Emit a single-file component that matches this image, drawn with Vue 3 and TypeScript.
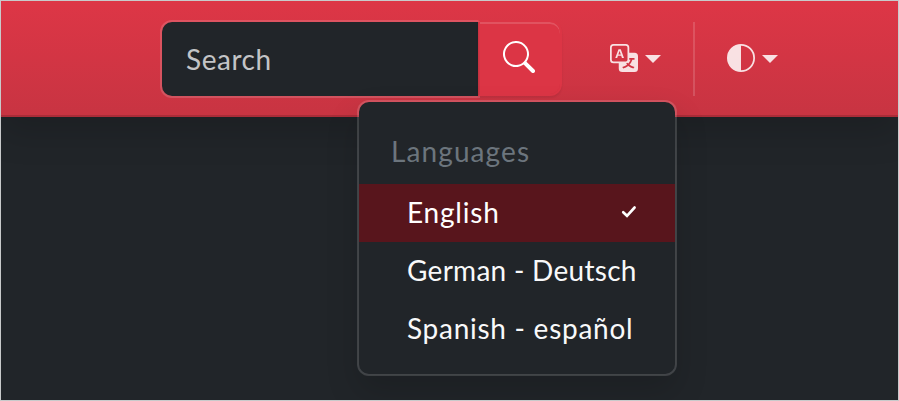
<script setup lang="ts">
interface Language {
  label: string
  kind: string
  active: boolean
}

const languages: Language[] = [
  { label: 'English', kind: 'english', active: true },
  { label: 'German - Deutsch', kind: 'german', active: false },
  { label: 'Spanish - español', kind: 'spanish', active: false },
]
</script>

<template>
  <div class="frame">
    <header class="navbar">
      <form class="search" @submit.prevent>
        <div class="search-input"><span class="t-search">Search</span></div>
        <button class="search-button" type="submit" aria-label="Search">
          <svg width="32" height="32" viewBox="0 0 16 16" fill="currentColor">
            <path d="M11.742 10.344a6.5 6.5 0 1 0-1.397 1.398h-.001q.044.06.098.115l3.85 3.85a1 1 0 0 0 1.415-1.414l-3.85-3.85a1 1 0 0 0-.115-.1zM12 6.5a5.5 5.5 0 1 1-11 0 5.5 5.5 0 0 1 11 0" />
          </svg>
        </button>
      </form>
      <nav class="tools">
        <div class="tool language">
          <svg width="28" height="28" viewBox="0 0 16 16" fill="currentColor">
            <path d="M4.545 6.714 4.11 8H3l1.862-5h1.284L8 8H6.833l-.435-1.286zm1.634-.736L5.5 3.956h-.049l-.679 2.022z" />
            <path d="M0 2a2 2 0 0 1 2-2h7a2 2 0 0 1 2 2v3h3a2 2 0 0 1 2 2v7a2 2 0 0 1-2 2H7a2 2 0 0 1-2-2v-3H2a2 2 0 0 1-2-2zm2-1a1 1 0 0 0-1 1v7a1 1 0 0 0 1 1h7a1 1 0 0 0 1-1V2a1 1 0 0 0-1-1zm7.138 9.995q.289.451.63.846c-.748.575-1.673 1.001-2.768 1.292.178.217.451.635.555.867 1.125-.359 2.08-.844 2.886-1.494.777.665 1.739 1.165 2.93 1.472.133-.254.414-.673.629-.89-1.125-.253-2.057-.694-2.82-1.284.681-.747 1.222-1.651 1.621-2.757H14V8h-3v1.047h.765c-.318.844-.74 1.546-1.272 2.13a6 6 0 0 1-.415-.492 2 2 0 0 1-.94.31" />
          </svg>
          <span class="caret"></span>
        </div>
        <div class="divider"></div>
        <div class="tool theme">
          <svg width="28" height="28" viewBox="0 0 16 16" fill="currentColor">
            <path d="M8 15A7 7 0 1 0 8 1zm0 1A8 8 0 1 1 8 0a8 8 0 0 1 0 16" />
          </svg>
          <span class="caret"></span>
        </div>
      </nav>
      <div class="menu">
        <div class="menu-title"><span class="t-title">Languages</span></div>
        <div
          v-for="language in languages"
          :key="language.kind"
          class="menu-item"
          :class="{ active: language.active }"
        >
          <span :class="'t-' + language.kind">{{ language.label }}</span>
          <svg v-if="language.active" class="check" width="18" height="16" viewBox="0 0 18 16">
            <path d="M3.2 8.2 7 11.8 14.6 3.5" />
          </svg>
        </div>
      </div>
    </header>
    <main class="page"></main>
  </div>
</template>

<style>
body {
  background: #212529;
}
</style>

<style scoped>
.frame {
  box-sizing: border-box;
  width: 899px;
  height: 401px;
  display: flex;
  flex-direction: column;
  overflow: hidden;
  border: 1px solid #c8cacb;
  background: #212529;
  font-family: Lato, "Noto Sans", sans-serif;
  font-size: 28px;
  line-height: 42px;
}
.navbar {
  position: relative;
  box-sizing: border-box;
  flex: none;
  height: 116px;
  padding: 19px 0 0 159px;
  display: flex;
  align-items: flex-start;
  border-bottom: 2px solid #aa2c38;
  background: linear-gradient(#dd3646, #c83442);
  box-shadow: 0 16px 32px rgba(0, 0, 0, 0.15);
}
.search {
  display: flex;
}
.search-input {
  box-sizing: border-box;
  width: 320px;
  height: 78px;
  padding: 16px 24px;
  border: 2px solid rgba(255, 255, 255, 0.15);
  border-right: 0;
  border-radius: 12px 0 0 12px;
  background: linear-gradient(#212529, #212529) 0 0 / 316px 100% no-repeat;
  background-clip: padding-box;
  color: #c3c4c6;
}
.search-button {
  box-sizing: border-box;
  width: 84px;
  height: 76px;
  margin: 0 0 0 -2px;
  padding: 0;
  display: flex;
  align-items: center;
  justify-content: center;
  border: 2px solid #dc3545;
  border-left-color: transparent;
  border-radius: 0 12px 12px 0;
  background: #dc3545;
  background-clip: padding-box;
  box-shadow: inset 0 2px 0 rgba(255, 255, 255, 0.15), 0 2px 2px rgba(0, 0, 0, 0.075);
  color: #fff;
}
.search-button svg {
  margin: -2px 2px 0 0;
}
.tools {
  display: flex;
  align-items: center;
  height: 74px;
  margin: 2px 0 0 48px;
}
.tool {
  display: flex;
  align-items: center;
  gap: 7px;
  color: rgba(255, 255, 255, 0.85);
}
.tool svg {
  display: block;
  margin-top: -2px;
}
.caret {
  width: 0;
  height: 0;
  border-top: 8px solid;
  border-right: 8px solid transparent;
  border-left: 8px solid transparent;
}
.divider {
  width: 2px;
  height: 74px;
  margin: 0 32px;
  background: rgba(255, 255, 255, 0.15);
}
.menu {
  position: absolute;
  z-index: 5;
  top: 99px;
  left: 356px;
  box-sizing: border-box;
  width: 320px;
  height: 276px;
  padding: 16px 0;
  border: 2px solid rgba(255, 255, 255, 0.15);
  border-radius: 12px;
  background: #212529;
  background-clip: padding-box;
  box-shadow: 0 16px 32px rgba(0, 0, 0, 0.15);
  color: #f8f9fa;
}
.menu-title {
  height: 66px;
  box-sizing: border-box;
  padding: 12px 32px;
  color: #6c757d;
}
.menu-item {
  display: flex;
  align-items: center;
  justify-content: space-between;
  box-sizing: border-box;
  height: 58px;
  padding: 0 37px 2px 48px;
  white-space: nowrap;
}
.menu-item.active {
  background: #58151c;
  color: #fff;
}
.check {
  fill: none;
  stroke: currentColor;
  stroke-width: 2.6;
  stroke-linecap: round;
}
.t-search {
  letter-spacing: 0.55px;
}
.t-title {
  letter-spacing: 1.1px;
}
.t-english {
  letter-spacing: 0.8px;
}
.t-german {
  letter-spacing: 0.28px;
}
.t-spanish {
  letter-spacing: 0.73px;
}
</style>
